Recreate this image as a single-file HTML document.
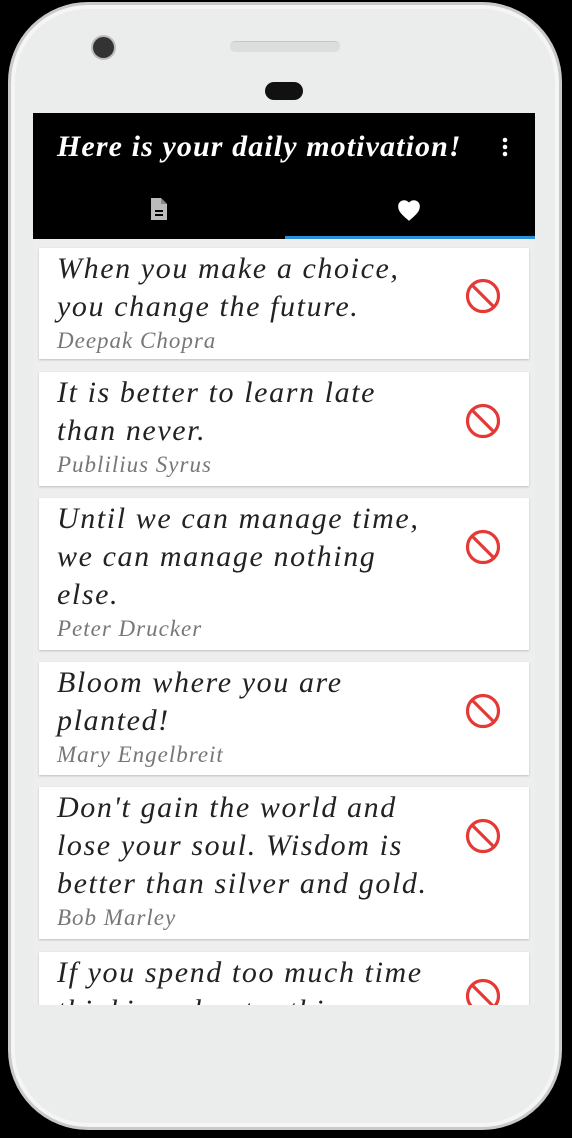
<!DOCTYPE html>
<html><head><style>
body{margin:0;width:572px;height:1138px;background:#000;position:relative;overflow:hidden;font-family:"Liberation Serif",serif}
.phone{position:absolute;left:8px;top:2px;width:554px;height:1128px;border-radius:80px;background:#ebecec;border:3px solid #c9c9c9;box-sizing:border-box;box-shadow:inset 0 0 0 4px #f5f5f5}
.screen{position:absolute;left:33px;top:113px;width:502px;height:892px;background:#eeeeee;overflow:hidden}
.bar{position:absolute;left:0;top:0;width:502px;height:126px;background:#000}
.title{position:absolute;left:24px;top:17px;color:#fff;font-style:italic;font-weight:bold;font-size:30px;letter-spacing:1.1px;white-space:nowrap}
.ind{position:absolute;left:252px;top:123px;width:250px;height:3px;background:#2a8fd8}
.card{position:absolute;left:6px;width:490px;background:#fff;box-shadow:0 1px 2px rgba(0,0,0,.2)}
.q{position:absolute;left:18px;top:2px;font-style:italic;font-size:30px;line-height:38px;color:#222;white-space:nowrap;letter-spacing:1.6px}
.a{font-size:23px;color:#777;line-height:30px;letter-spacing:1px}
.ban{position:absolute;left:420px}
</style></head><body>
<div class="phone"></div>
<div style="position:absolute;left:93px;top:37px;width:21px;height:21px;border-radius:50%;background:#333;box-shadow:0 0 0 2px #bbb"></div>
<div style="position:absolute;left:230px;top:41px;width:110px;height:10px;border-radius:5px;background:#ddd;border-top:1px solid #c8c8c8"></div>
<div style="position:absolute;left:265px;top:82px;width:38px;height:18px;border-radius:9px;background:#111"></div>
<div class="screen">
<div class="bar">
<div class="title">Here is your daily motivation!</div>
<svg style="position:absolute;left:466px;top:24px" width="12" height="22"><circle cx="6" cy="3" r="2.3" fill="#fff"/><circle cx="6" cy="10" r="2.3" fill="#fff"/><circle cx="6" cy="17" r="2.3" fill="#fff"/></svg>
<svg style="position:absolute;left:115px;top:84px" width="22" height="24" viewBox="0 0 22 24"><path d="M3 1h10l6 6v16H3z" fill="#bbb"/><path d="M13 1v6h6" fill="#888"/><rect x="7" y="13" width="8" height="2" fill="#000"/><rect x="7" y="17" width="8" height="2" fill="#000"/></svg>
<svg style="position:absolute;left:363px;top:85px" width="26" height="24" viewBox="0 0 24 22"><path d="M12 21l-1.5-1.3C5 14.8 2 12.1 2 7.5 2 4.4 4.4 2 7.5 2c1.7 0 3.4.8 4.5 2.1C13.1 2.8 14.8 2 16.5 2 19.6 2 22 4.4 22 7.5c0 4.6-3 7.3-8.5 12.2z" fill="#fff"/></svg>
<div class="ind"></div>
</div>
<div class="card" style="top:135px;height:111px"><div class="q">When you make a choice,<br>you change the future.<div class="a">Deepak Chopra</div></div><svg class="ban" style="top:24px" width="48" height="48"><circle cx="24" cy="24" r="15.5" fill="none" stroke="#e53935" stroke-width="3.2"/><line x1="13" y1="13" x2="35" y2="35" stroke="#e53935" stroke-width="3.2"/></svg></div>
<div class="card" style="top:259px;height:114px"><div class="q">It is better to learn late<br>than never.<div class="a">Publilius Syrus</div></div><svg class="ban" style="top:25px" width="48" height="48"><circle cx="24" cy="24" r="15.5" fill="none" stroke="#e53935" stroke-width="3.2"/><line x1="13" y1="13" x2="35" y2="35" stroke="#e53935" stroke-width="3.2"/></svg></div>
<div class="card" style="top:385px;height:152px"><div class="q">Until we can manage time,<br>we can manage nothing<br>else.<div class="a">Peter Drucker</div></div><svg class="ban" style="top:25px" width="48" height="48"><circle cx="24" cy="24" r="15.5" fill="none" stroke="#e53935" stroke-width="3.2"/><line x1="13" y1="13" x2="35" y2="35" stroke="#e53935" stroke-width="3.2"/></svg></div>
<div class="card" style="top:549px;height:113px"><div class="q">Bloom where you are<br>planted!<div class="a">Mary Engelbreit</div></div><svg class="ban" style="top:25px" width="48" height="48"><circle cx="24" cy="24" r="15.5" fill="none" stroke="#e53935" stroke-width="3.2"/><line x1="13" y1="13" x2="35" y2="35" stroke="#e53935" stroke-width="3.2"/></svg></div>
<div class="card" style="top:674px;height:152px"><div class="q">Don't gain the world and<br>lose your soul. Wisdom is<br>better than silver and gold.<div class="a">Bob Marley</div></div><svg class="ban" style="top:25px" width="48" height="48"><circle cx="24" cy="24" r="15.5" fill="none" stroke="#e53935" stroke-width="3.2"/><line x1="13" y1="13" x2="35" y2="35" stroke="#e53935" stroke-width="3.2"/></svg></div>
<div class="card" style="top:839px;height:152px"><div class="q">If you spend too much time<br>thinking about a thing<div class="a"></div></div><svg class="ban" style="top:20px" width="48" height="48"><circle cx="24" cy="24" r="15.5" fill="none" stroke="#e53935" stroke-width="3.2"/><line x1="13" y1="13" x2="35" y2="35" stroke="#e53935" stroke-width="3.2"/></svg></div>
</div>
</body></html>
